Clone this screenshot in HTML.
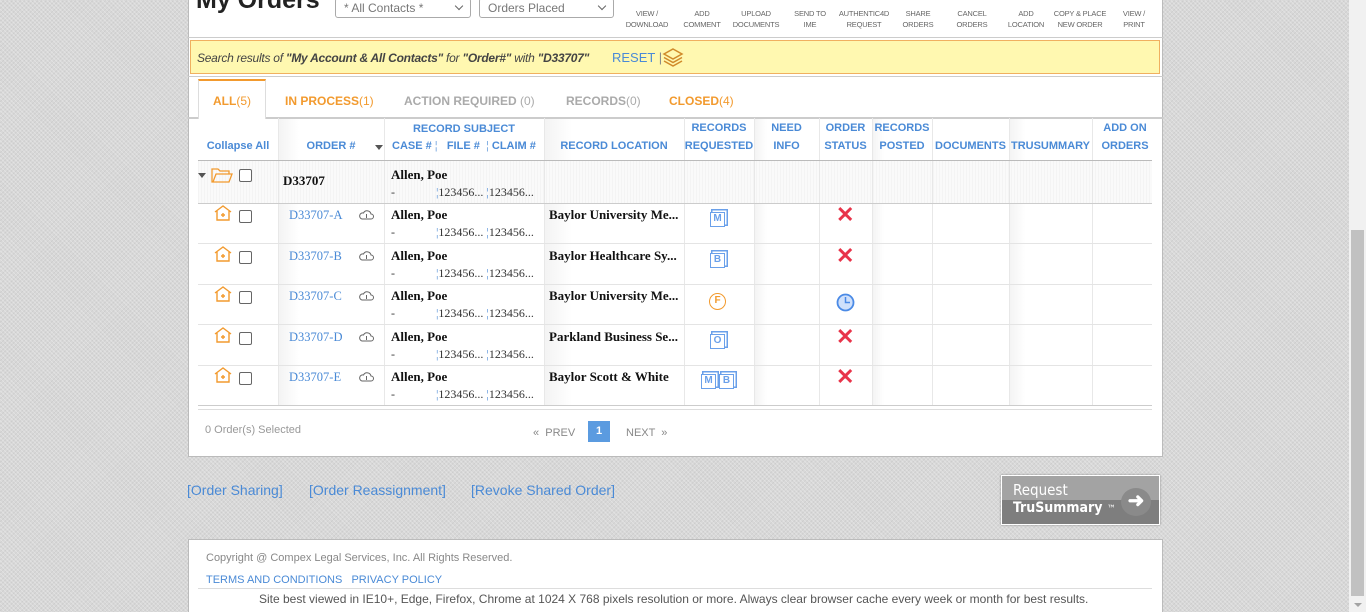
<!DOCTYPE html>
<html><head><meta charset="utf-8"><style>
*{box-sizing:border-box;margin:0;padding:0}
html,body{width:1366px;height:612px;overflow:hidden}
body{position:relative;font-family:"Liberation Sans",sans-serif;
background-color:#d8d8d8;background-image:repeating-linear-gradient(45deg,rgba(255,255,255,.25) 0 1px,transparent 1px 3px),repeating-linear-gradient(-45deg,rgba(0,0,0,.05) 0 1px,transparent 1px 3px)}
.a{position:absolute}
.panel{left:188px;top:-2px;width:975px;height:459px;background:#fff;border:1px solid #bbb}
.tb{font-size:7.5px;color:#666;text-align:center;line-height:11px;top:8px;width:54px;background:#fff;white-space:nowrap;letter-spacing:-0.2px}
.sel{top:-2px;height:20px;border:1px solid #aaa;border-radius:3px;font-size:12px;color:#777;padding:2px 8px;background:#fff}
.sel:after{content:"";position:absolute;right:8px;top:4px;width:5px;height:5px;border-right:1.5px solid #666;border-bottom:1.5px solid #666;transform:rotate(45deg)}
.th{font-size:11px;font-weight:bold;color:#4a8ad6;text-align:center;line-height:18px}
.colbg{background:linear-gradient(90deg,#f3f3f3,#fff 20%)}
.ser{font-family:"Liberation Serif",serif;font-weight:bold;font-size:13px;color:#111}
.lnk{font-family:"Liberation Serif",serif;font-size:12.5px;color:#4a8ad6}
.num{font-family:"Liberation Serif",serif;font-size:12px;color:#333}
.vl{position:absolute;top:118px;height:288px;width:1px;background:#e8e8e8}
.hl{position:absolute;left:198px;width:954px;height:1px;background:#e4e4e4}
.cb{width:13px;height:13px;border:1px solid #666;border-radius:2px;background:#fff}
.x{color:#e8344a;font-size:22px;line-height:18px;font-weight:bold}
.bx{width:15px;height:15px;border:1.5px solid #6aa0ea;font-size:10px;font-weight:bold;color:#6aa0ea;text-align:center;line-height:12px;box-shadow:2px -2px 0 -0.5px #fff,2px -2px 0 1px #6aa0ea}
</style></head><body>
<div class="a panel"></div>
<div class="a" style="left:196px;top:-14px;font-size:25px;font-weight:bold;color:#222">My Orders</div>
<div class="a sel" style="left:335px;width:136px">* All Contacts *</div>
<div class="a sel" style="left:479px;width:135px">Orders Placed</div>
<div class="a tb" style="left:620px">VIEW /<br>DOWNLOAD</div>
<div class="a tb" style="left:675px">ADD<br>COMMENT</div>
<div class="a tb" style="left:729px">UPLOAD<br>DOCUMENTS</div>
<div class="a tb" style="left:783px">SEND TO<br>IME</div>
<div class="a tb" style="left:837px">AUTHENTIC4D<br>REQUEST</div>
<div class="a tb" style="left:891px">SHARE<br>ORDERS</div>
<div class="a tb" style="left:945px">CANCEL<br>ORDERS</div>
<div class="a tb" style="left:999px">ADD<br>LOCATION</div>
<div class="a tb" style="left:1053px">COPY &amp; PLACE<br>NEW ORDER</div>
<div class="a tb" style="left:1107px">VIEW /<br>PRINT</div>
<div class="a" style="left:188px;top:37px;width:975px;height:1px;background:#ccc"></div>
<div class="a" style="left:190px;top:40px;width:970px;height:34px;background:#fff8b0;border:1px solid #f0b060"></div>
<div class="a" style="left:197px;top:51px;font-size:12px;letter-spacing:-0.25px;font-style:italic;color:#444;white-space:nowrap">Search results of <b>"My Account &amp; All Contacts"</b> for <b>"Order#"</b> with <b>"D33707"</b></div>
<div class="a" style="left:610px;top:50px;font-size:13px;color:#4a8ad6;background:#fff8b0;padding-left:2px">RESET <span style="color:#888">|</span></div>
<svg class="a" style="left:662px;top:47px" width="22" height="22" viewBox="0 0 22 22" fill="none" stroke="#d08a2a" stroke-width="1.5"><path d="M11 2L20 7 11 12 2 7Z"/><path d="M2 10.5L11 15.5 20 10.5"/><path d="M2 14L11 19 20 14"/></svg>
<div class="a" style="left:188px;top:76px;width:975px;height:1px;background:#ccc"></div>
<div class="a" style="left:198px;top:79px;width:68px;height:40px;background:#fff;border:1px solid #ddd;border-top:2px solid #f29a2e;border-bottom:none;z-index:2"></div>
<div class="a" style="left:188px;top:117px;width:975px;height:2px;background:#ccc"></div>
<div class="a" style="left:213px;top:94px;font-size:12px;font-weight:bold;color:#f29a2e;z-index:3">ALL<span style="font-weight:normal">(5)</span></div>
<div class="a" style="left:285px;top:94px;font-size:12px;font-weight:bold;color:#f29a2e">IN PROCESS<span style="font-weight:normal">(1)</span></div>
<div class="a" style="left:404px;top:94px;font-size:12px;font-weight:bold;color:#aaa">ACTION REQUIRED <span style="font-weight:normal">(0)</span></div>
<div class="a" style="left:566px;top:94px;font-size:12px;font-weight:bold;color:#aaa">RECORDS<span style="font-weight:normal">(0)</span></div>
<div class="a" style="left:669px;top:94px;font-size:12px;font-weight:bold;color:#f29a2e">CLOSED<span style="font-weight:normal">(4)</span></div>
<div class="a colbg" style="left:278px;top:119px;width:106px;height:287px"></div>
<div class="a colbg" style="left:544px;top:119px;width:140px;height:287px"></div>
<div class="a colbg" style="left:754px;top:119px;width:65px;height:287px"></div>
<div class="a colbg" style="left:872px;top:119px;width:60px;height:287px"></div>
<div class="a colbg" style="left:1009px;top:119px;width:83px;height:287px"></div>
<div class="a" style="left:198px;top:160px;width:954px;height:43px;background:repeating-linear-gradient(90deg,#f4f4f4 0 1px,#fafafa 1px 3px)"></div>
<div class="vl" style="left:278px"></div><div class="vl" style="left:384px"></div><div class="vl" style="left:544px"></div><div class="vl" style="left:684px"></div><div class="vl" style="left:754px"></div><div class="vl" style="left:819px"></div><div class="vl" style="left:872px"></div><div class="vl" style="left:932px"></div><div class="vl" style="left:1009px"></div><div class="vl" style="left:1092px"></div>
<div class="a th" style="left:198px;top:137px;width:80px">Collapse All</div>
<div class="a th" style="left:278px;top:137px;width:106px">ORDER #</div>
<div class="a" style="left:375px;top:145px;border:4px solid transparent;border-top:5px solid #555"></div>
<div class="a th" style="left:384px;top:120px;width:160px">RECORD SUBJECT</div>
<div class="a th" style="left:392px;top:137px">CASE # <span style="color:#7aa8e0;font-weight:normal">¦</span> &nbsp; FILE # &nbsp;<span style="color:#7aa8e0;font-weight:normal">¦</span> CLAIM #</div>
<div class="a th" style="left:544px;top:137px;width:140px">RECORD LOCATION</div>
<div class="a th" style="left:684px;top:119px;width:70px">RECORDS<br>REQUESTED</div>
<div class="a th" style="left:754px;top:119px;width:65px">NEED<br>INFO</div>
<div class="a th" style="left:819px;top:119px;width:53px">ORDER<br>STATUS</div>
<div class="a th" style="left:872px;top:119px;width:60px">RECORDS<br>POSTED</div>
<div class="a th" style="left:932px;top:137px;width:77px">DOCUMENTS</div>
<div class="a th" style="left:1009px;top:137px;width:83px">TRUSUMMARY</div>
<div class="a th" style="left:1092px;top:119px;width:66px">ADD ON<br>ORDERS</div>
<div class="hl" style="top:160px;background:#bbb"></div>
<div class="hl" style="top:203px;background:#ccc"></div>
<div class="hl" style="top:243px"></div><div class="hl" style="top:284px"></div><div class="hl" style="top:324px"></div><div class="hl" style="top:365px"></div><div class="hl" style="top:405px;background:#ccc"></div>
<div class="a" style="left:198px;top:173px;border:4px solid transparent;border-top:5px solid #555"></div>
<svg class="a" style="left:211px;top:167px" width="22" height="16" viewBox="0 0 22 16" fill="none" stroke="#f29a2e" stroke-width="1.3"><path d="M1 4V15H18L21 7H5L2 15"/><path d="M1 4V2H7L9 4H18V7"/></svg>
<div class="a cb" style="left:239px;top:169px"></div>
<div class="a ser" style="left:283px;top:173px">D33707</div>
<div class="a ser" style="left:391px;top:167px">Allen, Poe</div>
<div class="a num" style="left:391px;top:185px">- <span style="margin-left:38px;color:#4a8ad6">¦</span>123456... <span style="color:#4a8ad6">¦</span>123456...</div>
<div id="rows"></div>
<script>
var d=[["A","Baylor University Me...","M","x"],["B","Baylor Healthcare Sy...","B","x"],["C","Baylor University Me...","F","c"],["D","Parkland Business Se...","O","x"],["E","Baylor Scott & White","MB","x"]];
var h="";
d.forEach(function(r,i){var y=203+i*40.5;
h+='<svg class="a" style="left:214px;top:'+(y+2)+'px" width="18" height="16" viewBox="0 0 18 16" fill="none" stroke="#f29a2e" stroke-width="1.4"><path d="M1 7L9 1 17 7M3 6V15H15V6"/><path d="M7 10H11M9 8V12"/></svg>';
h+='<div class="a cb" style="left:239px;top:'+(y+7)+'px"></div>';
h+='<div class="a lnk" style="left:289px;top:'+(y+5)+'px">D33707-'+r[0]+'</div>';
h+='<svg class="a" style="left:359px;top:'+(y+6)+'px" width="15" height="11" viewBox="0 0 15 11" fill="none" stroke="#666" stroke-width="1"><path d="M3 10H12A2.5 2.5 0 0 0 12 5A4 4 0 0 0 4.5 4A3 3 0 0 0 3 10Z"/><path d="M7.5 5V9"/></svg>';
h+='<div class="a ser" style="left:391px;top:'+(y+4)+'px">Allen, Poe</div>';
h+='<div class="a num" style="left:391px;top:'+(y+22)+'px">- <span style="margin-left:38px;color:#4a8ad6">¦</span>123456... <span style="color:#4a8ad6">¦</span>123456...</div>';
h+='<div class="a ser" style="left:549px;top:'+(y+4)+'px">'+r[1].replace("&","&amp;")+'</div>';
if(r[2]=="F")h+='<div class="a" style="left:709px;top:'+(y+85/10)+'px;width:17px;height:17px;border:1.5px solid #f29a2e;border-radius:50%;color:#f29a2e;font-size:10px;font-weight:bold;text-align:center;line-height:14px">F</div>';
else{for(var k=0;k<r[2].length;k++)h+='<div class="a bx" style="left:'+((r[2].length>1?701:710)+k*18)+'px;top:'+(y+9)+'px">'+r[2][k]+'</div>';}
if(r[3]=="x")h+='<div class="a x" style="left:836px;top:'+(y+3)+'px">✕</div>';
else h+='<svg class="a" style="left:836px;top:'+(y+85/10)+'px" width="19" height="19" viewBox="0 0 19 19"><circle cx="9.5" cy="9.5" r="8" fill="#cfe0fb" stroke="#4a8ae6" stroke-width="1.8"/><path d="M9.5 4V9.5H14" fill="none" stroke="#4a8ae6" stroke-width="1.5"/></svg>';
});
document.getElementById("rows").innerHTML=h;
</script>
<div class="a" style="left:198px;top:409px;width:954px;height:1px;background:#ddd"></div>
<div class="a" style="left:205px;top:424px;font-size:11px;color:#999">0 Order(s) Selected</div>
<div class="a" style="left:533px;top:427px;font-size:11px;color:#888">« &nbsp;PREV</div>
<div class="a" style="left:588px;top:421px;width:22px;height:21px;background:#5b9be0;color:#fff;font-size:11px;font-weight:bold;text-align:center;line-height:21px">1</div>
<div class="a" style="left:626px;top:427px;font-size:11px;color:#888">NEXT &nbsp;»</div>
<div class="a" style="left:187px;top:482px;font-size:14px;color:#4a8ad6">[Order Sharing]</div>
<div class="a" style="left:309px;top:482px;font-size:14px;color:#4a8ad6">[Order Reassignment]</div>
<div class="a" style="left:471px;top:482px;font-size:14px;color:#4a8ad6">[Revoke Shared Order]</div>
<div class="a" style="left:1001px;top:475px;width:159px;height:50px;border:1px solid #fff;box-shadow:0 0 2px #888;background:linear-gradient(#a3a3a3 0 50%,#7e7e7e 50%)"></div>
<div class="a" style="left:1013px;top:481px;font-size:15px;color:#fff;font-family:'DejaVu Sans Condensed','Liberation Sans',sans-serif">Request</div>
<div class="a" style="left:1013px;top:500px;font-size:14px;font-weight:bold;color:#fff;font-family:'DejaVu Sans Condensed','Liberation Sans',sans-serif">TruSummary <span style="font-size:10px;font-weight:normal">™</span></div>
<div class="a" style="left:1121px;top:488px;width:30px;height:28px;border-radius:50%;background:#8a8a8a;color:#fff;font-size:20px;text-align:center;line-height:27px;font-weight:bold">➜</div>
<div class="a" style="left:188px;top:539px;width:975px;height:80px;background:#fff;border:1px solid #bbb"></div>
<div class="a" style="left:206px;top:552px;font-size:11px;color:#888">Copyright @ Compex Legal Services, Inc. All Rights Reserved.</div>
<div class="a" style="left:206px;top:574px;font-size:11px;color:#4a8ad6">TERMS AND CONDITIONS &nbsp; PRIVACY POLICY</div>
<div class="a" style="left:198px;top:588px;width:954px;height:1px;background:#ddd"></div>
<div class="a" style="left:259px;top:592px;font-size:12px;color:#555">Site best viewed in IE10+, Edge, Firefox, Chrome at 1024 X 768 pixels resolution or more. Always clear browser cache every week or month for best results.</div>
<div class="a" style="left:1349px;top:0;width:17px;height:612px;background:#f1f1f1"></div>
<div class="a" style="left:1351px;top:230px;width:13px;height:366px;background:#c1c1c1"></div>
<div class="a" style="left:1354px;top:603px;border:4px solid transparent;border-top:4px solid #a3a3a3"></div>
</body></html>
